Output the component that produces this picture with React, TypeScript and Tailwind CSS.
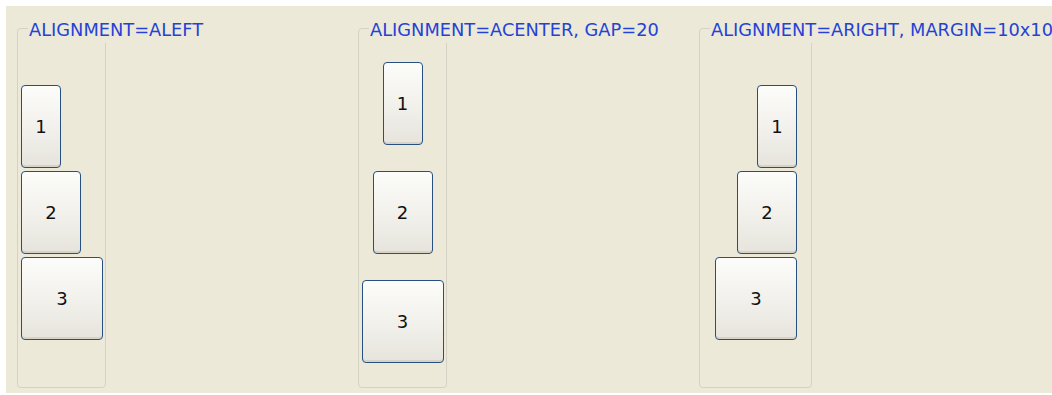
const font = { fontFamily: '"DejaVu Sans", "Liberation Sans", sans-serif' };

type Align = 'left' | 'center' | 'right';

interface GroupProps {
  title: string;
  align: Align;
  gap: string;
  width: string;
  pad: string;
}

const sizes = ['w-[40px]', 'w-[60px]', 'w-[82px]'];

function XpButton({ label, w }: { label: string; w: string }) {
  return (
    <button
      className={`${w} h-[83px] shrink-0 rounded-[4px] border border-[#284f82] bg-gradient-to-b from-[#fcfcfa] via-[#f2f1ec] to-[#e6e4dc] shadow-[inset_0_-2px_0_#d8d3c7] text-[18px] text-[#111] flex items-center justify-center`}
    >
      {label}
    </button>
  );
}

function Group({ title, align, gap, width, pad }: GroupProps) {
  const items =
    align === 'left' ? 'items-start' : align === 'center' ? 'items-center' : 'items-end';
  return (
    <div className={`relative ${width} h-[360px] mt-[22px] border border-[#d3d2c4] rounded-[4px]`}>
      <div className="absolute left-[10px] top-[-12px] pl-[1px] pr-2 h-[26px] leading-[25px] bg-[#ece9d8] text-[#2442d6] text-[17.8px] whitespace-nowrap">
        {title}
      </div>
      <div className={`h-full flex flex-col justify-center ${items} ${gap} ${pad} pt-[9px]`}>
        {['1', '2', '3'].map((l, i) => (
          <XpButton key={l} label={l} w={sizes[i]} />
        ))}
      </div>
    </div>
  );
}

export default function App() {
  return (
    <div className="w-[1052px] h-[395px] bg-white overflow-hidden" style={font}>
      <div className="ml-[6px] mt-[6px] h-[387px] bg-[#ece9d8] flex pl-[11px]">
        <div className="w-[341px] shrink-0">
          <Group title="ALIGNMENT=ALEFT" align="left" gap="gap-[3px]" width="w-[89px]" pad="pl-[3px]" />
        </div>
        <div className="w-[341px] shrink-0">
          <Group title="ALIGNMENT=ACENTER, GAP=20" align="center" gap="gap-[26px]" width="w-[89px]" pad="" />
        </div>
        <div className="w-[341px] shrink-0">
          <Group title="ALIGNMENT=ARIGHT, MARGIN=10x10" align="right" gap="gap-[3px]" width="w-[113px]" pad="pr-[14px]" />
        </div>
      </div>
    </div>
  );
}
